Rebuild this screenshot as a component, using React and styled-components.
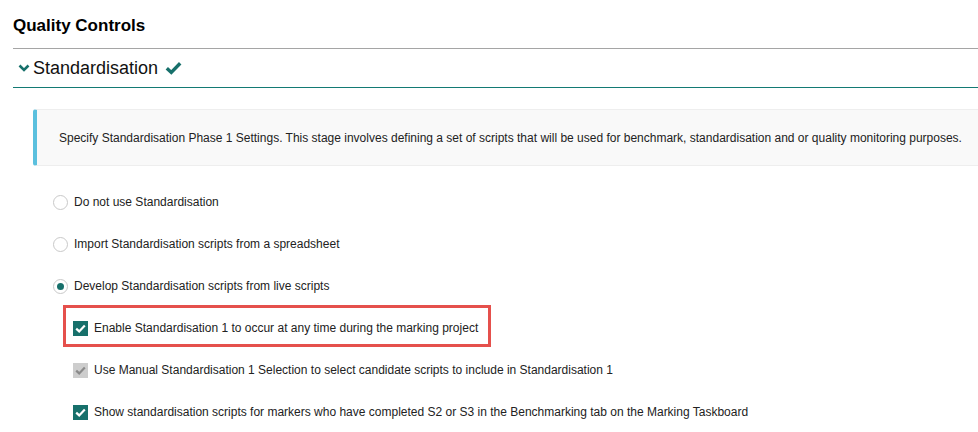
import React from "react";
import styled, { createGlobalStyle } from "styled-components";

const GlobalStyle = createGlobalStyle`
  body {
    margin: 0;
    font-family: "Liberation Sans", Arial, sans-serif;
    color: #222;
    background: #fff;
    overflow: hidden;
  }
`;

const Page = styled.div`
  padding: 14px 0 0 13px;
  width: 1100px;
`;

const Title = styled.h2`
  margin: 0;
  font-size: 17px;
  font-weight: bold;
  line-height: 24px;
  padding-bottom: 10px;
  border-bottom: 1px solid #a5a5a5;
  color: #000;
`;

const SectionHeader = styled.div`
  display: flex;
  align-items: center;
  height: 38px;
  border-bottom: 1px solid #137a74;
  font-size: 18px;
  color: #111;
`;

const Chevron = styled.svg`
  margin: 0 3px 0 5px;
`;

const DoneIcon = styled.svg`
  margin-left: 7px;
`;

const Callout = styled.div`
  margin: 21px 0 0 20px;
  height: 57px;
  box-sizing: border-box;
  display: flex;
  align-items: center;
  padding-left: 22px;
  background: #f9f9f9;
  border: 1px solid #eee;
  border-left: 4px solid #5bc0de;
  border-radius: 3px 0 0 3px;
  font-size: 12px;
  color: #222;
`;

const Options = styled.div`
  margin-top: 15px;
`;

const RadioRow = styled.label`
  display: flex;
  align-items: center;
  height: 42px;
  padding-left: 40px;
  font-size: 12px;
  gap: 6px;
`;

const Radio = styled.span`
  width: 13px;
  height: 13px;
  border-radius: 50%;
  border: 1px solid #c9c9c9;
  background: #fff;
  display: flex;
  align-items: center;
  justify-content: center;

  &::after {
    content: "";
    width: 7px;
    height: 7px;
    border-radius: 50%;
    background: ${(p) => (p.$checked ? "#17706b" : "transparent")};
  }
`;

const CheckRow = styled.label`
  display: flex;
  align-items: center;
  height: 42px;
  padding-left: 60px;
  font-size: 12px;
  gap: 6px;
`;

const Highlight = styled.div`
  display: flex;
  align-items: center;
  align-self: flex-start;
  box-sizing: border-box;
  width: 428px;
  height: 42px;
  margin: -2px 0 0 -10px;
  padding: 4px 0 0 7px;
  border: 3px solid #e5504c;
  gap: 6px;
`;

const Box = styled.span`
  width: 15px;
  height: 15px;
  flex: none;
  display: flex;
  align-items: center;
  justify-content: center;
  background: ${(p) => (p.$disabled ? "#cdcdcd" : "#17706b")};
`;

const Tick = ({ color }) => (
  <svg width="11" height="9" viewBox="0 0 11 9">
    <path d="M1.2 4.6 L4.2 7.4 L9.8 1.6" fill="none" stroke={color} strokeWidth="2.2" />
  </svg>
);

const Checkbox = ({ disabled }) => (
  <Box $disabled={disabled}>
    <Tick color={disabled ? "#8a8a8a" : "#fff"} />
  </Box>
);

export default function App() {
  return (
    <Page>
      <GlobalStyle />
      <Title>Quality Controls</Title>
      <SectionHeader>
        <Chevron width="12" height="8" viewBox="0 0 12 8">
          <path d="M1.5 1.5 L6 6 L10.5 1.5" fill="none" stroke="#17706b" strokeWidth="2.6" />
        </Chevron>
        Standardisation
        <DoneIcon width="17" height="14" viewBox="0 0 17 14">
          <path d="M1.8 7.2 L6.3 11.4 L15.2 2.2" fill="none" stroke="#17706b" strokeWidth="3.4" />
        </DoneIcon>
      </SectionHeader>
      <Callout>
        Specify Standardisation Phase 1 Settings. This stage involves defining a set of scripts that will be used for benchmark, standardisation and or quality monitoring purposes.
      </Callout>
      <Options>
        <RadioRow>
          <Radio />
          Do not use Standardisation
        </RadioRow>
        <RadioRow>
          <Radio />
          Import Standardisation scripts from a spreadsheet
        </RadioRow>
        <RadioRow>
          <Radio $checked />
          Develop Standardisation scripts from live scripts
        </RadioRow>
        <CheckRow>
          <Highlight>
            <Checkbox />
            Enable Standardisation 1 to occur at any time during the marking project
          </Highlight>
        </CheckRow>
        <CheckRow>
          <Checkbox disabled />
          Use Manual Standardisation 1 Selection to select candidate scripts to include in Standardisation 1
        </CheckRow>
        <CheckRow>
          <Checkbox />
          Show standardisation scripts for markers who have completed S2 or S3 in the Benchmarking tab on the Marking Taskboard
        </CheckRow>
      </Options>
    </Page>
  );
}
